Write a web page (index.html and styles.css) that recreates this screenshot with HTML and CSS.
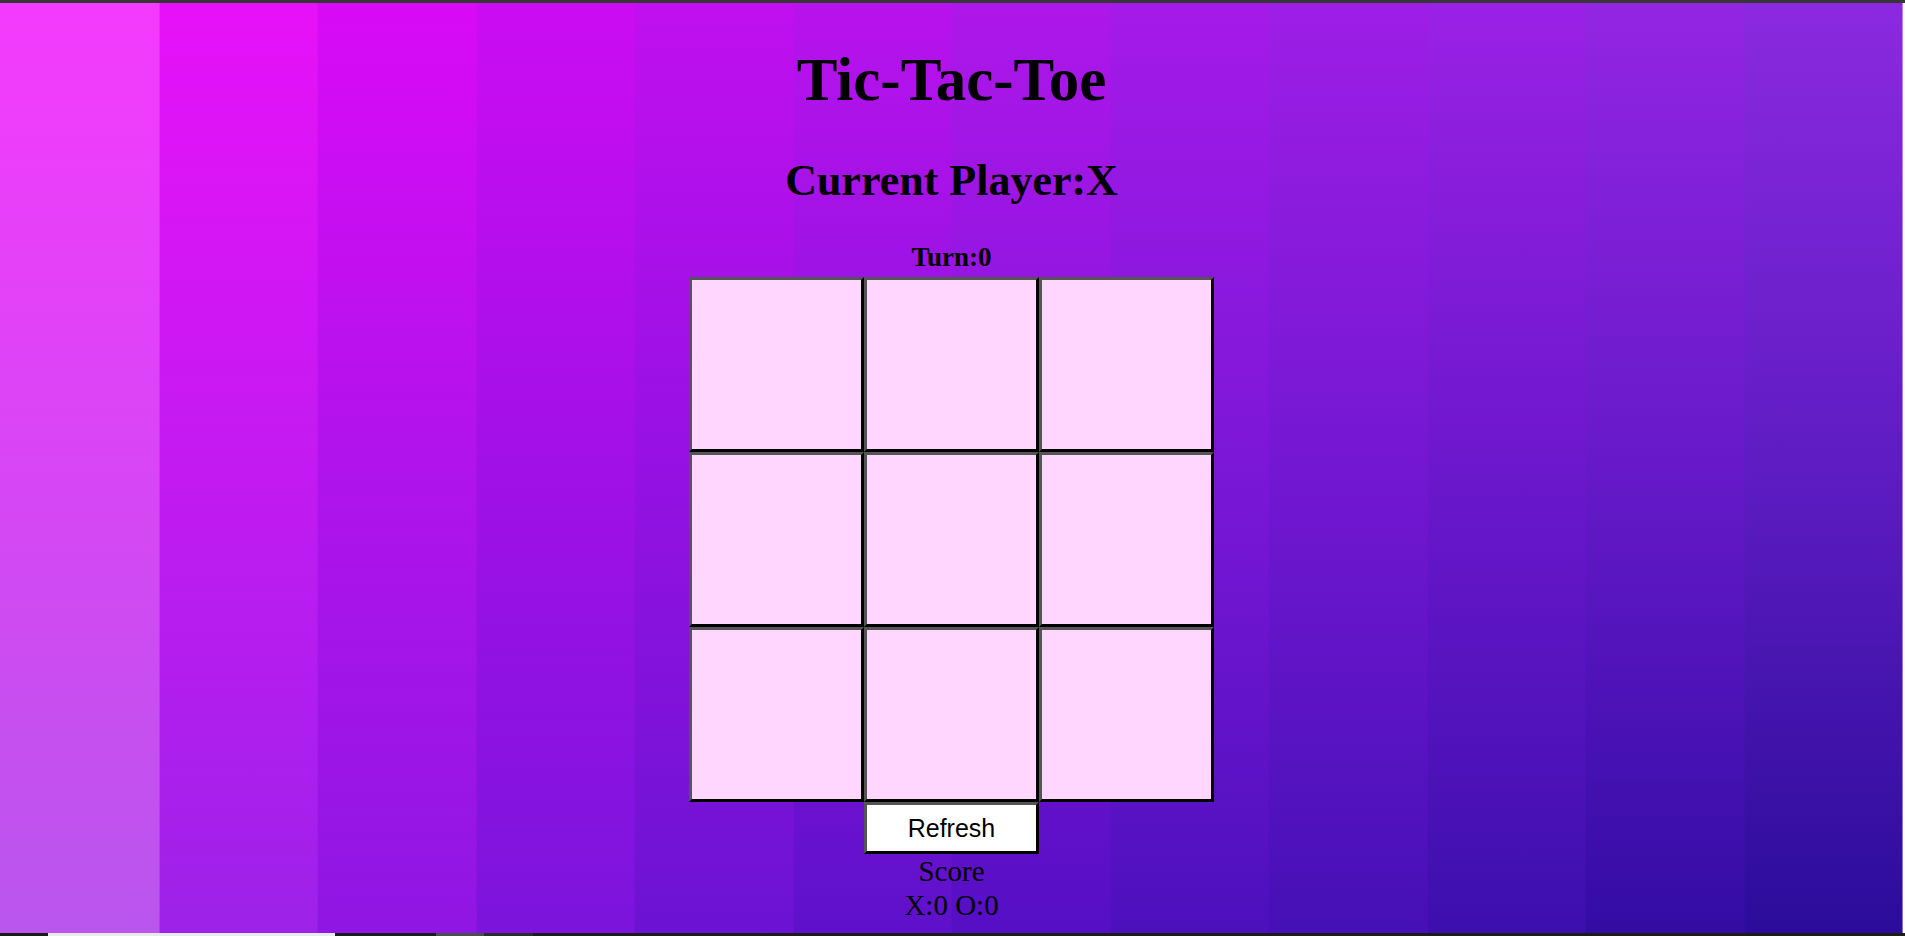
FILE: index.html
```html
<!DOCTYPE html>
<html lang="en">
<head>
    <meta charset="UTF-8">
    <title>Tic-Tac-Toe</title>
    <link rel="stylesheet" href="styles.css">
</head>
<body>
<div class="screen">
    <div class="top-bar"></div>
    <main class="page">
        <h1 class="title">Tic-Tac-Toe</h1>
        <h2 class="player">Current Player:X</h2>
        <div class="turn">Turn:0</div>
        <div class="board">
            <button class="cell"></button>
            <button class="cell"></button>
            <button class="cell"></button>
            <button class="cell"></button>
            <button class="cell"></button>
            <button class="cell"></button>
            <button class="cell"></button>
            <button class="cell"></button>
            <button class="cell"></button>
        </div>
        <button class="refresh-button">Refresh</button>
        <div class="score">
            <div>Score</div>
            <div>X:0 O:0</div>
        </div>
    </main>
    <div class="task-bar">
        <span class="task task-space"></span>
        <span class="task task-white"></span>
        <span class="task task-gap"></span>
        <span class="task task-grey"></span>
        <span class="task task-dim"></span>
    </div>
</div>
</body>
</html>
```

FILE: styles.css
```css
body {
    margin: 0;
    padding: 0;
    background-color: #ffffff;
    font-family: "Liberation Serif", "Times New Roman", serif;
    color: #000000;
    overflow: hidden;
}

.screen {
    display: flex;
    flex-direction: column;
    height: 936px;
}

.top-bar {
    height: 3px;
    background-color: #363636;
}

.page {
    flex: 1;
    margin-right: 2px;
    padding-top: 43px;
    box-sizing: border-box;
    display: flex;
    flex-direction: column;
    align-items: center;
    background-repeat: no-repeat;
    background-size: calc(100% / 12 + 1px) 100%;
    background-image:
        linear-gradient(#f43afc, #d846f5, #b956ec),
        linear-gradient(#e711f8, #c31af1, #9d22e8),
        linear-gradient(#d90af6, #b013ec, #8f16e4),
        linear-gradient(#cc0cf3, #a110e7, #7b14dc),
        linear-gradient(#c10ff0, #9511e3, #6b13d2),
        linear-gradient(#b812ed, #8b13df, #5e11ca),
        linear-gradient(#ae17ea, #8315db, #550fc4),
        linear-gradient(#a51ae8, #7b17d7, #4c10bd),
        linear-gradient(#9e1ee6, #7317d2, #4510b6),
        linear-gradient(#9a21e5, #6c17cd, #3c0fad),
        linear-gradient(#9325e3, #6619c9, #330ca4),
        linear-gradient(#8b29e0, #5e1cc2, #2b0c9a);
    background-position:
        0 0,
        9.0909% 0,
        18.1818% 0,
        27.2727% 0,
        36.3636% 0,
        45.4545% 0,
        54.5454% 0,
        63.6363% 0,
        72.7272% 0,
        81.8181% 0,
        90.9090% 0,
        100% 0;
}

.title {
    margin: 0;
    font-size: 61px;
    line-height: 68px;
    font-weight: bold;
}

.player {
    margin: 41px 0 0 0;
    font-size: 44px;
    line-height: 52px;
    font-weight: bold;
}

.turn {
    margin: 35px 0 5px 0;
    font-size: 27px;
    line-height: 30px;
    font-weight: bold;
}

.board {
    display: grid;
    grid-template-columns: repeat(3, 175px);
    grid-template-rows: repeat(3, 175px);
}

.cell,
.refresh-button {
    box-sizing: border-box;
    margin: 0;
    padding: 0;
    border-width: 3px;
    border-style: solid;
    border-color: #555555 #000000 #000000 #555555;
    cursor: pointer;
}

.cell {
    width: 175px;
    height: 175px;
    background-color: #ffd6fe;
}

.refresh-button {
    width: 175px;
    height: 52px;
    background-color: #ffffff;
    font-family: "Liberation Sans", Arial, sans-serif;
    font-size: 25px;
    color: #000000;
}

.score {
    font-size: 29px;
    line-height: 34px;
    text-align: center;
}

.task-bar {
    display: flex;
    height: 3px;
    background-color: #1c1c1c;
}

.task-space {
    width: 48px;
}

.task-white {
    width: 287px;
    background-color: #e9e9ee;
}

.task-gap {
    width: 101px;
}

.task-grey {
    width: 48px;
    background-color: #4d4d4d;
}

.task-dim {
    width: 49px;
    background-color: #2c2c2c;
}
```
